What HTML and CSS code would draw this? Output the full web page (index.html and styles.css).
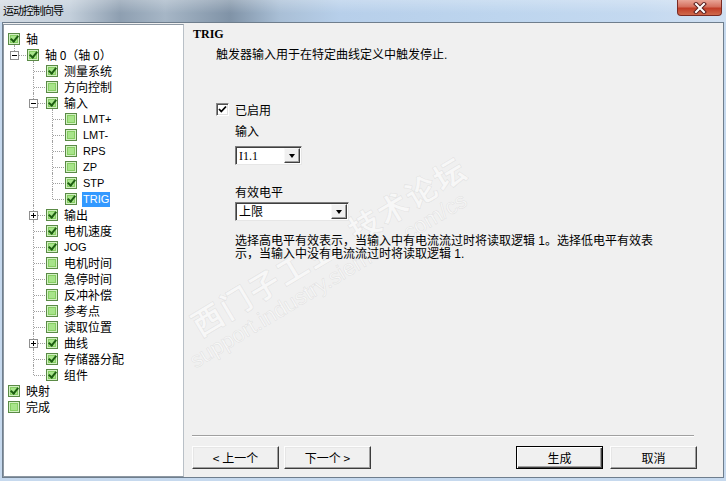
FILE: index.html
```html
<!DOCTYPE html>
<html lang="zh-CN">
  <head>
    <meta charset="UTF-8" />
    <meta name="viewport" content="width=device-width, initial-scale=1.0" />
    <title>运动控制向导</title>
    <link rel="stylesheet" href="styles.css">
  </head>
  <body>
    <div class="window">
      <div class="titlebar">
        <span class="title">运动控制向导</span>
        <div class="close">
          <svg width="18" height="12" viewBox="0 0 18 12">
            <path d="M5 2 L13 10 M13 2 L5 10" stroke="#5a2020" stroke-width="4" stroke-linecap="square" />
            <path d="M5 2 L13 10 M13 2 L5 10" stroke="#ffffff" stroke-width="2" stroke-linecap="square" />
          </svg>
        </div>
      </div>

      <div class="client">
        <div class="tree-box">
          <ul class="tree">
            <li>
              <div class="node"><span class="cb on"></span><span class="label">轴</span></div>
              <ul>
                <li>
                  <div class="node"><span class="exp minus"></span><span class="cb on"></span><span class="label">轴 0（轴 0）</span></div>
                  <ul>
                    <li><div class="node"><span class="cb on"></span><span class="label">测量系统</span></div></li>
                    <li><div class="node"><span class="cb"></span><span class="label">方向控制</span></div></li>
                    <li>
                      <div class="node"><span class="exp minus"></span><span class="cb on"></span><span class="label">输入</span></div>
                      <ul>
                        <li><div class="node"><span class="cb"></span><span class="label en">LMT+</span></div></li>
                        <li><div class="node"><span class="cb"></span><span class="label en">LMT-</span></div></li>
                        <li><div class="node"><span class="cb"></span><span class="label en">RPS</span></div></li>
                        <li><div class="node"><span class="cb"></span><span class="label en">ZP</span></div></li>
                        <li><div class="node"><span class="cb on"></span><span class="label en">STP</span></div></li>
                        <li><div class="node"><span class="cb on"></span><span class="label en selected">TRIG</span></div></li>
                      </ul>
                    </li>
                    <li><div class="node"><span class="exp plus"></span><span class="cb on"></span><span class="label">输出</span></div></li>
                    <li><div class="node"><span class="cb on"></span><span class="label">电机速度</span></div></li>
                    <li><div class="node"><span class="cb on"></span><span class="label en">JOG</span></div></li>
                    <li><div class="node"><span class="cb"></span><span class="label">电机时间</span></div></li>
                    <li><div class="node"><span class="cb"></span><span class="label">急停时间</span></div></li>
                    <li><div class="node"><span class="cb"></span><span class="label">反冲补偿</span></div></li>
                    <li><div class="node"><span class="cb"></span><span class="label">参考点</span></div></li>
                    <li><div class="node"><span class="cb"></span><span class="label">读取位置</span></div></li>
                    <li><div class="node"><span class="exp plus"></span><span class="cb on"></span><span class="label">曲线</span></div></li>
                    <li><div class="node"><span class="cb on"></span><span class="label">存储器分配</span></div></li>
                    <li><div class="node"><span class="cb on"></span><span class="label">组件</span></div></li>
                  </ul>
                </li>
              </ul>
            </li>
            <li><div class="node"><span class="cb on"></span><span class="label">映射</span></div></li>
            <li><div class="node"><span class="cb"></span><span class="label">完成</span></div></li>
          </ul>
        </div>

        <div class="main">
          <div class="heading">TRIG</div>
          <div class="desc">触发器输入用于在特定曲线定义中触发停止.</div>

          <label class="enable">
            <span class="check-box">
              <svg width="11" height="11" viewBox="0 0 11 11">
                <path d="M2 5 L4.3 7.5 L9 2.5" fill="none" stroke="#000" stroke-width="1.8" />
              </svg>
            </span>
            <span>已启用</span>
          </label>

          <div class="field">
            <div class="field-label">输入</div>
            <div class="combo combo-short">
              <span class="combo-text serif">I1.1</span>
              <span class="combo-btn"><span class="arrow"></span></span>
            </div>
          </div>

          <div class="field field-gap">
            <div class="field-label">有效电平</div>
            <div class="combo combo-long">
              <span class="combo-text">上限</span>
              <span class="combo-btn"><span class="arrow"></span></span>
            </div>
          </div>

          <p class="note">选择高电平有效表示，当输入中有电流流过时将读取逻辑 1。选择低电平有效表示，当输入中没有电流流过时将读取逻辑 1.</p>

          <div class="separator"></div>

          <div class="buttons">
            <button class="btn">&lt; 上一个</button>
            <button class="btn">下一个 &gt;</button>
            <button class="btn btn-default push">生成</button>
            <button class="btn btn-cancel">取消</button>
          </div>

          <div class="watermark">
            <div class="wm-big">西门子工业 &nbsp;技术论坛</div>
            <div class="wm-url">support.industry.siemens.com/cs</div>
          </div>
        </div>
      </div>
      <div class="frame-bottom"></div>
    </div>
  </body>
</html>
```

FILE: styles.css
```css
  body {
    margin: 0;
    width: 726px;
    height: 481px;
    overflow: hidden;
    background: #c6d9ee;
    font-family: "Liberation Sans", "Noto Sans CJK SC", sans-serif;
    font-size: 12px;
    color: #000;
  }

  .window {
    display: flex;
    flex-direction: column;
    height: 481px;
  }

  /* title bar */
  .titlebar {
    display: flex;
    align-items: flex-start;
    height: 22px;
    flex: none;
    background:
      linear-gradient(180deg, rgba(255, 255, 255, 0.25), rgba(255, 255, 255, 0) 60%),
      linear-gradient(90deg, #d3dbe3 0, #c3cfdb 70px, #8e9fb1 120px, #a6b6c6 165px, #8093a7 230px, #a9bfd6 280px, #b7cfea 340px, #bdd5ee 500px, #c4d9f0 640px, #cfdff1 726px);
  }

  .title {
    padding: 3px 0 0 3px;
    font-family: "Noto Sans CJK SC", sans-serif;
    font-size: 11px;
    line-height: 14px;
    letter-spacing: -1px;
  }

  .close {
    margin-left: auto;
    margin-right: 4px;
    width: 45px;
    height: 16px;
    box-sizing: border-box;
    border: 1px solid #7a2a22;
    border-top: none;
    border-radius: 0 0 4px 4px;
    background: linear-gradient(180deg, #e9a597 0, #d5705e 45%, #c13d27 55%, #cf6a4c 100%);
    display: flex;
    align-items: center;
    justify-content: center;
  }

  /* client area */
  .client {
    display: flex;
    height: 456px;
    box-sizing: border-box;
    margin: 0 2px;
    border: 1px solid #6f7e8d;
    background: #f0f0f0;
  }

  .frame-bottom {
    flex: 1;
  }

  .tree-box {
    width: 181px;
    flex: none;
    box-sizing: border-box;
    margin-top: 1px;
    border: 1px solid #8d98a3;
    border-right-color: #b9c0c7;
    background: #fff;
  }

  .tree {
    list-style: none;
    margin: 0;
    padding: 6px 0 0 4px;
  }

  .tree ul {
    list-style: none;
    margin: 0;
    padding-left: 19px;
  }

  .tree ul li {
    position: relative;
  }

  .tree ul li::before {
    content: "";
    position: absolute;
    left: -13px;
    top: -2px;
    bottom: 0;
    border-left: 1px dotted #a0a0a0;
  }

  .tree ul li:last-child::before {
    bottom: auto;
    height: 10px;
  }

  .node {
    position: relative;
    display: flex;
    align-items: center;
    height: 16px;
    white-space: nowrap;
  }

  .tree ul .node::before {
    content: "";
    position: absolute;
    left: -12px;
    top: 8px;
    width: 11px;
    border-top: 1px dotted #a0a0a0;
  }

  .exp {
    position: absolute;
    left: -17px;
    top: 4px;
    width: 9px;
    height: 9px;
    box-sizing: border-box;
    border: 1px solid #8f8f8f;
    background: #fff;
    z-index: 1;
  }

  .exp::before {
    content: "";
    position: absolute;
    left: 1px;
    top: 3px;
    width: 5px;
    height: 1px;
    background: #000;
  }

  .exp.plus::after {
    content: "";
    position: absolute;
    left: 3px;
    top: 1px;
    width: 1px;
    height: 5px;
    background: #000;
  }

  .cb {
    position: relative;
    flex: none;
    width: 12px;
    height: 12px;
    box-sizing: border-box;
    border: 1px solid #5a8a46;
    background: #d3f1c3;
  }

  .cb::before {
    content: "";
    position: absolute;
    left: 1px;
    top: 1px;
    width: 8px;
    height: 8px;
    box-sizing: border-box;
    border: 1px solid #86cd63;
    background: #a7e48a;
  }

  .cb.on::after {
    content: "";
    position: absolute;
    left: 3px;
    top: 0;
    width: 3px;
    height: 6px;
    border: solid #1d5e12;
    border-width: 0 2px 2px 0;
    transform: rotate(40deg);
  }

  .label {
    margin-left: 6px;
    line-height: 16px;
    font-family: "Noto Sans CJK SC", sans-serif;
  }

  .label.en {
    font-family: "Liberation Sans", sans-serif;
    font-size: 11px;
  }

  .label.selected {
    margin-left: 5px;
    padding: 0 1px;
    line-height: 15px;
    background: #3399ff;
    color: #fff;
  }

  /* main panel */
  .main {
    position: relative;
    flex: 1;
    display: flex;
    flex-direction: column;
    padding: 4px 26px 8px 8px;
  }

  .main > * {
    position: relative;
    z-index: 1;
  }

  .heading {
    margin-left: 1px;
    font-family: "Liberation Serif", serif;
    font-weight: bold;
    font-size: 12px;
    line-height: 14px;
  }

  .desc {
    margin: 7px 0 0 24px;
    line-height: 14px;
  }

  .enable {
    display: flex;
    align-items: center;
    margin: 41px 0 0 24px;
    height: 13px;
  }

  .check-box {
    width: 13px;
    height: 13px;
    box-sizing: border-box;
    border: 1px solid;
    border-color: #8a8a8a #fff #fff #8a8a8a;
    box-shadow: inset 1px 1px #505050, inset -1px -1px #e0e0e0;
    background: #fff;
    display: flex;
    align-items: center;
    justify-content: center;
    margin-right: 6px;
  }

  .field {
    margin: 9px 0 0 43px;
  }

  .field-gap {
    margin-top: 21px;
  }

  .field-label {
    line-height: 14px;
  }

  .combo {
    display: flex;
    align-items: center;
    height: 19px;
    box-sizing: border-box;
    margin-top: 7px;
    border: 1px solid;
    border-color: #7d7d7d #e6e6e6 #e6e6e6 #7d7d7d;
    box-shadow: inset 1px 1px #3f3f3f;
    background: #fff;
  }

  .field-gap .combo {
    margin-top: 2px;
  }

  .combo-short {
    width: 67px;
  }

  .combo-long {
    width: 114px;
  }

  .combo-text {
    flex: 1;
    padding-left: 3px;
    line-height: 16px;
  }

  .combo-text.serif {
    font-family: "Liberation Serif", serif;
    font-size: 12px;
  }

  .combo-btn {
    width: 16px;
    height: 15px;
    box-sizing: border-box;
    margin-right: 1px;
    border: 1px solid;
    border-color: #f8f8f8 #404040 #404040 #f8f8f8;
    box-shadow: inset -1px -1px #a0a0a0;
    background: #f0f0f0;
    display: flex;
    align-items: center;
    justify-content: center;
  }

  .arrow {
    width: 0;
    height: 0;
    border-top: 4px solid #000;
    border-left: 3.5px solid transparent;
    border-right: 3.5px solid transparent;
  }

  .note {
    margin: 14px 0 0 43px;
    width: 425px;
    line-height: 13px;
  }

  .separator {
    margin: auto 3px 9px 0;
    border-top: 1px solid #a0a0a0;
    border-bottom: 1px solid #fff;
  }

  .buttons {
    display: flex;
    gap: 5px;
  }

  .btn {
    width: 87px;
    height: 23px;
    box-sizing: border-box;
    border: 1px solid;
    border-color: #fdfdfd #3c3c3c #3c3c3c #fdfdfd;
    box-shadow: inset -1px -1px #a0a0a0, inset 1px 1px #e6e6e6;
    background: #f0f0f0;
    font-family: "Noto Sans CJK SC", sans-serif;
    font-size: 12px;
    color: #000;
    padding: 0;
  }

  .btn-default {
    border-color: #000;
    box-shadow: inset 1px 1px #fff, inset -1px -1px #404040, inset -2px -2px #a0a0a0;
  }

  .push {
    margin-left: auto;
  }

  .btn-cancel {
    margin-left: 2px;
  }

  /* faint forum watermark */
  .watermark {
    position: absolute;
    left: 14px;
    top: 290px;
    z-index: 0;
    transform: rotate(-31deg);
    transform-origin: 0 100%;
    white-space: nowrap;
    pointer-events: none;
    color: rgba(255, 255, 255, 0.5);
    -webkit-text-stroke: 0.7px rgba(150, 150, 150, 0.18);
  }

  .wm-big {
    padding-left: 20px;
    font-family: "Noto Sans CJK SC", sans-serif;
    font-weight: bold;
    font-size: 31px;
    line-height: 36px;
    letter-spacing: 2px;
  }

  .wm-url {
    font-family: "Liberation Sans", sans-serif;
    font-size: 22px;
    line-height: 24px;
  }
```
